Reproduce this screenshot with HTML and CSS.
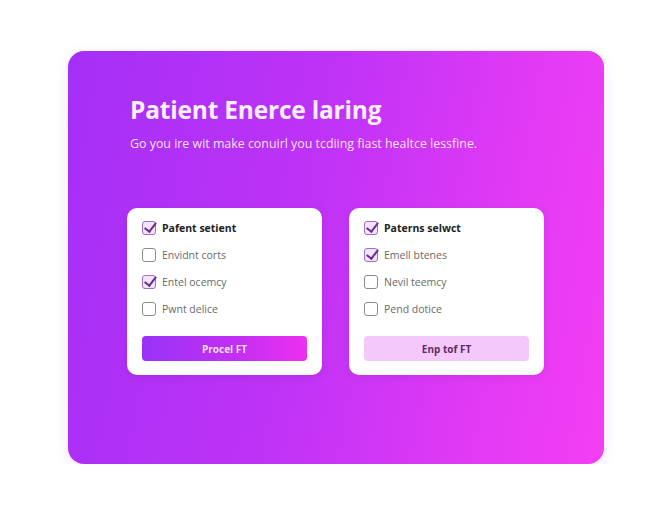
FILE: index.html
```html
<!DOCTYPE html>
<html lang="en">
<head>
    <meta charset="UTF-8">
    <meta name="viewport" content="width=device-width, initial-scale=1.0">
    <title>Patient Enerce laring</title>
    <link rel="stylesheet" href="styles.css">
</head>
<body>

<div class="panel">
    <h1 class="titulo">Patient Enerce laring</h1>
    <p class="subtitulo">Go you ire wit make conuirl you tcdiing fiast healtce lessfine.</p>

    <div class="tarjetas">
        <div class="tarjeta">
            <ul class="lista">
                <li class="fila principal"><span class="caja marcada"></span>Pafent setient</li>
                <li class="fila"><span class="caja"></span>Envidnt corts</li>
                <li class="fila"><span class="caja marcada"></span>Entel ocemcy</li>
                <li class="fila"><span class="caja"></span>Pwnt delice</li>
            </ul>
            <button class="boton lleno">Procel FT</button>
        </div>

        <div class="tarjeta">
            <ul class="lista">
                <li class="fila principal"><span class="caja marcada"></span>Paterns selwct</li>
                <li class="fila"><span class="caja marcada"></span>Emell btenes</li>
                <li class="fila"><span class="caja"></span>Nevil teemcy</li>
                <li class="fila"><span class="caja"></span>Pend dotice</li>
            </ul>
            <button class="boton suave">Enp tof FT</button>
        </div>
    </div>
</div>

</body>
</html>
```

FILE: styles.css
```css
body {
    font-family: 'Open Sans', 'Liberation Sans', sans-serif;
    margin: 0;
    background-color: white;
    color: #222;
}
.panel {
    margin: 51px 0 0 68px;
    width: 536px;
    height: 413px;
    box-sizing: border-box;
    padding: 43px 60px 0 59px;
    border-radius: 16px;
    background: linear-gradient(100deg, #a52ff6 0%, #bf33f6 45%, #e23af5 78%, #f43ef4 100%);
    box-shadow: 0 4px 14px rgba(190, 70, 240, 0.15);
}
.titulo {
    margin: 0 0 0 3px;
    font-size: 24.5px;
    line-height: 32px;
    font-weight: 700;
    color: #fbeefe;
    letter-spacing: -0.2px;
}
.subtitulo {
    margin: 9px 0 0 3px;
    font-size: 12.4px;
    line-height: 18px;
    color: rgba(255, 255, 255, 0.88);
}
.tarjetas {
    display: flex;
    gap: 27px;
    margin-top: 55px;
}
.tarjeta {
    width: 195px;
    box-sizing: border-box;
    padding: 13px 15px 14px 15px;
    background-color: #fff;
    border-radius: 10px;
    box-shadow: 0 2px 8px rgba(90, 0, 140, 0.12);
}
.lista {
    list-style: none;
    margin: 0;
    padding: 0;
    display: flex;
    flex-direction: column;
    gap: 13px;
}
.fila {
    display: flex;
    align-items: center;
    gap: 6px;
    height: 14px;
    font-size: 10.5px;
    color: #6a6a6a;
}
.fila.principal {
    font-weight: 700;
    color: #222;
}
.caja {
    width: 14px;
    height: 14px;
    box-sizing: border-box;
    border: 1.3px solid #8a8a8a;
    border-radius: 3px;
    flex-shrink: 0;
    position: relative;
}
.caja.marcada {
    border-color: #a070cc;
    background-color: #f1e4fb;
}
/* palomita del checkbox, sobresale un poco de la caja */
.caja.marcada::after {
    content: "";
    position: absolute;
    left: 4px;
    top: -2px;
    width: 4.5px;
    height: 10px;
    border: solid #6b2a96;
    border-width: 0 2px 2px 0;
    transform: rotate(38deg);
}
.boton {
    display: block;
    width: 100%;
    height: 25px;
    margin-top: 20px;
    border: none;
    border-radius: 4px;
    font-family: 'Open Sans', 'Liberation Sans', sans-serif;
    font-size: 10px;
    font-weight: 700;
    cursor: pointer;
}
.boton.lleno {
    background: linear-gradient(90deg, #9a32f7, #c02ff2 55%, #ee2ff0);
    color: #f6dcfb;
}
.boton.suave {
    background-color: #f5c8fa;
    color: #5b2c6c;
}
```
